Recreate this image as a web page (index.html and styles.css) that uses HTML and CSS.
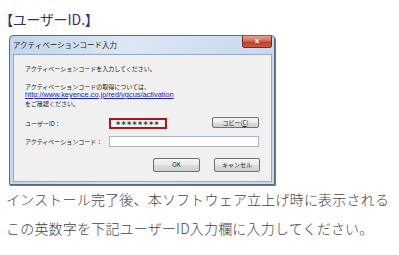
FILE: index.html
```html
<!DOCTYPE html>
<html lang="ja">
<head>
    <meta charset="UTF-8">
    <meta name="viewport" content="width=device-width, initial-scale=1.0">
    <title>ユーザーID</title>
    <link rel="stylesheet" href="styles.css">
</head>
<body>

    <div class="step">
        <h3 class="step-title">【ユーザーID.】</h3>

        <div class="dialog">
            <div class="titlebar">
                <span class="title">アクティベーションコード入力</span>
                <span class="close">x</span>
            </div>
            <div class="client">
                <p class="msg">アクティベーションコードを入力してください。</p>
                <p class="msg info">アクティベーションコードの取得については、<br><a href="#">http://www.keyence.co.jp/red/vgcus/activation</a><br>をご確認ください。</p>

                <div class="row">
                    <span class="label">ユーザーID：</span>
                    <span class="pw">********</span>
                    <span class="btn btn-copy">コピー(<u>C</u>)</span>
                </div>
                <div class="row row-code">
                    <span class="label">アクティベーションコード：</span>
                    <span class="input"></span>
                </div>
                <div class="actions">
                    <span class="btn btn-ok">OK</span>
                    <span class="btn btn-cancel">キャンセル</span>
                </div>
            </div>
        </div>

        <p class="desc">インストール完了後、本ソフトウェア立上げ時に表示される<br>この英数字を下記ユーザーID入力欄に入力してください。</p>
    </div>

</body>
</html>
```

FILE: styles.css
```css
body {
  margin: 0;
  background: #ffffff;
  font-family: "Noto Sans CJK JP", "Noto Sans", sans-serif;
}

.step {
  padding: 9px 0 0 6px;
}

.step-title {
  margin: 0;
  font-size: 14px;
  line-height: 20px;
  font-weight: normal;
  color: #34317a;
  font-feature-settings: "palt";
}

/* windows 7 style dialog */
.dialog {
  width: 266px;
  height: 150px;
  box-sizing: border-box;
  margin: 6px 0 0 3px;
  padding: 0 2px 2px 3px;
  border: 1px solid #5a6b80;
  border-radius: 4px 4px 0 0;
  background: linear-gradient(to right, #c3d6ec, #dbe7f4 45%, #c7d9ed);
  display: flex;
  flex-direction: column;
  box-shadow: 1px 1px 0 #777;
}

.titlebar {
  height: 18px;
  display: flex;
  justify-content: space-between;
  align-items: flex-start;
}

.title {
  font-size: 7.5px;
  line-height: 17px;
  color: #1e1e1e;
}

.close {
  width: 30px;
  height: 12px;
  box-sizing: border-box;
  border: 1px solid #6d2b22;
  border-top: none;
  border-radius: 0 0 3px 3px;
  background: linear-gradient(#e6a395, #d26e5d 45%, #bf3f2d 55%, #cc5a44);
  color: #ffffff;
  font-family: "DejaVu Sans", sans-serif;
  font-size: 7px;
  font-weight: bold;
  line-height: 10px;
  text-align: center;
}

.client {
  flex: 1;
  box-sizing: border-box;
  border: 1px solid #93a9c3;
  background: #f0f0f0;
  padding: 9px 12px 0 11px;
  color: #1a1a1a;
}

.msg {
  margin: 0;
  font-size: 6px;
  line-height: 9px;
}

.info {
  margin-top: 9.5px;
  line-height: 8.5px;
}

.info a {
  font-family: "Liberation Sans", sans-serif;
  font-size: 7.4px;
  color: #1c1cc8;
}

.row {
  display: flex;
  align-items: center;
  height: 11px;
  margin-top: 10px;
  font-size: 6px;
}

.row-code {
  margin-top: 7px;
}

.label {
  width: 84px;
  flex-shrink: 0;
}

.pw {
  width: 58px;
  height: 11px;
  box-sizing: border-box;
  border: 2px solid #b0121a;
  color: #3a3a3a;
  font-family: "DejaVu Sans", sans-serif;
  font-size: 8px;
  font-weight: bold;
  line-height: 11px;
  letter-spacing: 1.3px;
  text-align: center;
  overflow: hidden;
}

.input {
  flex: 1;
  height: 11px;
  box-sizing: border-box;
  border: 1px solid #abb5c4;
  background: #ffffff;
}

.btn {
  box-sizing: border-box;
  border: 1px solid #707070;
  border-radius: 2px;
  background: linear-gradient(#f4f4f4, #ebebeb 50%, #dcdcdc 50%, #cfcfcf);
  font-size: 6px;
  color: #1a1a1a;
  text-align: center;
}

.btn-copy {
  width: 47px;
  height: 11px;
  line-height: 9px;
  margin: -2px 0 0 auto;
}

.actions {
  display: flex;
  justify-content: flex-end;
  gap: 14px;
  margin: 11px -1px 0 0;
}

.btn-ok,
.btn-cancel {
  width: 47px;
  height: 14px;
  line-height: 12px;
}

.btn-cancel {
  width: 46px;
}

.desc {
  margin: 0;
  font-size: 14px;
  font-weight: 300;
  line-height: 29px;
  letter-spacing: 0.2px;
  color: #444444;
}
```
